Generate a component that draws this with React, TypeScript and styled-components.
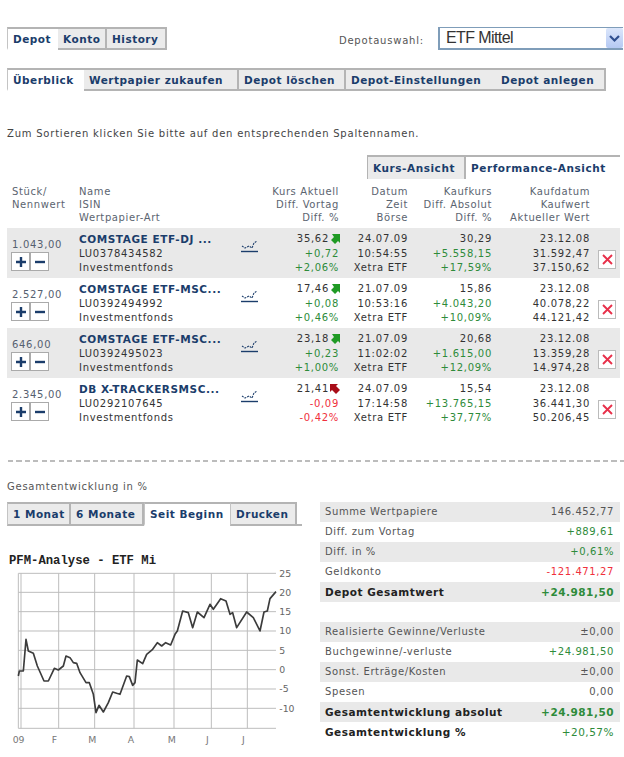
import React from 'react';
import styled, { createGlobalStyle } from 'styled-components';

const GlobalStyle = createGlobalStyle`
  html, body {
    margin: 0;
    padding: 0;
    background: #fff;
  }
  body {
    font-family: "DejaVu Sans", Verdana, sans-serif;
    font-size: 10px;
    color: #3a3a3a;
  }
`;

const NAVY = '#1b3d6b';
const GREEN = '#2e8b3a';
const RED = '#f0303c';

const Page = styled.div`
  width: 624px;
  height: 757px;
  overflow: hidden;
  padding: 27px 1px 0 7px;
  box-sizing: border-box;
`;

const TopBar = styled.div`
  display: flex;
  justify-content: space-between;
  align-items: stretch;
  height: 23px;
`;

const TabRow = styled.div`
  display: flex;
  height: 23px;
`;

const Tab = styled.div<{ $active?: boolean; $w: number; $sep?: boolean; $left?: boolean }>`
  width: ${(p) => p.$w}px;
  box-sizing: border-box;
  display: flex;
  align-items: center;
  padding-left: 5px;
  font-weight: bold;
  font-size: 10.5px;
  letter-spacing: 0.5px;
  white-space: nowrap;
  color: ${NAVY};
  background: ${(p) => (p.$active ? '#fff' : '#ebebeb')};
  border-top: 2px solid #b4b4b4;
  border-left: ${(p) => (p.$left || p.$active ? '1px solid #c4c4c4' : 'none')};
  border-right: ${(p) => (p.$sep ? '2px solid #b4b4b4' : 'none')};
  border-bottom: 2px solid ${(p) => (p.$active ? '#fff' : '#b4b4b4')};
`;

const TabTail = styled.div`
  width: 5px;
  box-sizing: border-box;
  border-bottom: 2px solid #b4b4b4;
`;

const Picker = styled.div`
  display: flex;
  align-items: center;
  gap: 14px;
`;

const PickerLabel = styled.span`
  font-size: 10px;
  letter-spacing: 0.8px;
  color: #555;
  margin-top: 4px;
`;

const SelectBox = styled.div`
  width: 185px;
  height: 23px;
  box-sizing: border-box;
  border: 1px solid #7f9db9;
  border-left-width: 2px;
  border-bottom-width: 2px;
  border-right: none;
  display: flex;
  align-items: center;
  justify-content: space-between;
  padding: 0 0 0 6px;
  font-family: "Liberation Sans", Arial, sans-serif;
  font-size: 16px;
  letter-spacing: -0.6px;
  color: #333;
`;

const SelectArrow = styled.div`
  width: 17px;
  height: 20px;
  border-radius: 2px;
  background: linear-gradient(#dbe6fb, #b5c9f3);
  display: flex;
  align-items: center;
  justify-content: center;
`;

const SubTabs = styled(TabRow)`
  margin-top: 18px;
`;

const Hint = styled.div`
  margin-top: 36px;
  height: 13px;
  line-height: 13px;
  font-size: 10px;
  letter-spacing: 0.78px;
  color: #444;
  white-space: nowrap;
`;

const ViewTabs = styled.div`
  margin: 15px 0 0 360px;
  display: flex;
  height: 24px;
`;

const ViewTab = styled.div<{ $active?: boolean; $w: number }>`
  width: ${(p) => p.$w}px;
  box-sizing: border-box;
  display: flex;
  align-items: center;
  padding-left: 5px;
  font-weight: bold;
  font-size: 10.5px;
  letter-spacing: 0.55px;
  white-space: nowrap;
  color: ${NAVY};
  background: ${(p) => (p.$active ? '#fff' : '#ebebeb')};
  border-top: 2px solid #b4b4b4;
  border-left: 1px solid #b4b4b4;
  border-right: ${(p) => (p.$active ? 'none' : '1px solid #b4b4b4')};
`;

const gridColumns = '72px 162px 30px 68px 69px 84px 98px 30px';

const HeadRow = styled.div`
  display: grid;
  grid-template-columns: ${gridColumns};
  height: 49px;
  padding-top: 6px;
  box-sizing: border-box;
  line-height: 13px;
  font-size: 10px;
  letter-spacing: 0.6px;
  color: #5b6470;
`;

const StockRow = styled.div<{ $shade?: boolean }>`
  display: grid;
  grid-template-columns: ${gridColumns};
  height: 50px;
  width: 613px;
  line-height: 14.5px;
  font-size: 10px;
  letter-spacing: 0.7px;
  background: ${(p) => (p.$shade ? '#e9e9e9' : '#fff')};
`;

const Cell = styled.div<{ $right?: boolean; $first?: boolean }>`
  text-align: ${(p) => (p.$right ? 'right' : 'left')};
  padding-left: ${(p) => (p.$first ? '5px' : '0')};
  white-space: nowrap;
`;

const StockCell = styled(Cell)`
  padding-top: 4px;
  color: #333;
`;

const AmountCell = styled.div`
  padding: 10px 0 0 5px;
  color: #556070;
  line-height: 14px;
`;

const StepGroup = styled.div`
  display: flex;
  margin-left: -1px;
`;

const StepButton = styled.div`
  width: 19px;
  height: 19px;
  box-sizing: border-box;
  border: 1px solid #aaa;
  background: #fff;
  display: flex;
  align-items: center;
  justify-content: center;
  color: ${NAVY};
`;

const StockName = styled.div`
  font-weight: bold;
  color: ${NAVY};
  letter-spacing: 0.55px;
  font-size: 10.5px;
`;

const ChartLink = styled.div`
  padding-top: 11px;
  color: ${NAVY};
`;

const PriceLine = styled.div`
  display: flex;
  justify-content: flex-end;
  align-items: center;
  gap: 1px;
  margin-right: -1px;
`;

const Figure = styled.div<{ $c?: string; $bold?: boolean }>`
  color: ${(p) => p.$c || 'inherit'};
  font-weight: ${(p) => (p.$bold ? 'bold' : 'normal')};
`;

const RemoveCell = styled.div`
  padding: 22px 0 0 8px;
`;

const RemoveButton = styled.div`
  width: 18px;
  height: 19px;
  box-sizing: border-box;
  border: 1px solid #bbb;
  background: #fff;
  display: flex;
  align-items: center;
  justify-content: center;
`;

const Divider = styled.div`
  margin: 32px 0 0 1px;
  height: 2px;
  width: 616px;
  background: repeating-linear-gradient(90deg, #bcbcbc 0 5px, #fff 5px 8.5px);
`;

const Bottom = styled.div`
  display: grid;
  grid-template-columns: 313px 300px;
  margin-top: 18px;
`;

const SectionTitle = styled.div`
  font-size: 10px;
  letter-spacing: 0.75px;
  line-height: 13px;
  color: #555;
`;

const RangeTabs = styled(TabRow)`
  margin-top: 8.5px;
  height: 24px;
`;

const ChartTitle = styled.div`
  margin: 28px 0 0 2px;
  font-family: "Liberation Mono", monospace;
  font-weight: bold;
  font-size: 12.25px;
  line-height: 14px;
  color: #222;
`;

const ChartSvg = styled.svg`
  display: block;
  width: 300px;
  height: 186.67px;
  margin: 0.67px 0 0 3px;
`;

const Summary = styled.div`
  margin-top: 21.5px;
  display: flex;
  flex-direction: column;
`;

const SummaryRow = styled.div<{ $shade?: boolean; $bold?: boolean; $gap?: boolean }>`
  height: 20px;
  margin-top: ${(p) => (p.$gap ? '20px' : '0')};
  display: flex;
  align-items: center;
  justify-content: space-between;
  padding: 0 6px 0 5px;
  font-size: ${(p) => (p.$bold ? '10.5px' : '10px')};
  font-weight: ${(p) => (p.$bold ? 'bold' : 'normal')};
  letter-spacing: ${(p) => (p.$bold ? '0.5px' : '0.6px')};
  color: ${(p) => (p.$bold ? '#222' : '#555')};
  background: ${(p) => (p.$shade ? '#e9e9e9' : '#fff')};
`;

const Plus = () => (
  <svg width="12" height="12" viewBox="0 0 12 12">
    <path d="M1 6h10M6 1v10" stroke="currentColor" strokeWidth="2.4" />
  </svg>
);

const Minus = () => (
  <svg width="12" height="12" viewBox="0 0 12 12">
    <path d="M1 6h10" stroke="currentColor" strokeWidth="2.4" />
  </svg>
);

const Cross = () => (
  <svg width="11" height="11" viewBox="0 0 11 11">
    <path d="M1 1l9 9M10 1l-9 9" stroke="#e8304a" strokeWidth="1.9" />
  </svg>
);

const MiniChart = () => (
  <svg width="17" height="14" viewBox="0 0 17 14">
    <path
      d="M1 7l3 2 4-2 3 2 2-5 3-2"
      fill="none"
      stroke="currentColor"
      strokeWidth="1.1"
      strokeDasharray="2 1"
    />
    <path d="M0 12.500h17" stroke="currentColor" strokeWidth="1.4" />
  </svg>
);

const Arrow = ({ up }: { up: boolean }) => (
  <svg width="10" height="10" viewBox="0 0 10 10">
    {up ? (
      <path d="M10 0v9L8 7 5 10 1 6l3-3-2-3z" fill="#1f9a24" />
    ) : (
      <path d="M0 0h8L6 2l4 4-4 4-4-4-2 2z" fill="#a80d18" />
    )}
  </svg>
);

type Stock = {
  amount: string;
  name: string;
  isin: string;
  price: string;
  diff: string;
  diffPct: string;
  date: string;
  time: string;
  buy: string;
  buyDiff: string;
  buyPct: string;
  buyDate: string;
  buyValue: string;
  current: string;
};

const stocks: Stock[] = [
  { amount: '1.043,00', name: 'COMSTAGE ETF-DJ ...', isin: 'LU0378434582', price: '35,62', diff: '+0,72', diffPct: '+2,06%', date: '24.07.09', time: '10:54:55', buy: '30,29', buyDiff: '+5.558,15', buyPct: '+17,59%', buyDate: '23.12.08', buyValue: '31.592,47', current: '37.150,62' },
  { amount: '2.527,00', name: 'COMSTAGE ETF-MSC...', isin: 'LU0392494992', price: '17,46', diff: '+0,08', diffPct: '+0,46%', date: '21.07.09', time: '10:53:16', buy: '15,86', buyDiff: '+4.043,20', buyPct: '+10,09%', buyDate: '23.12.08', buyValue: '40.078,22', current: '44.121,42' },
  { amount: '646,00', name: 'COMSTAGE ETF-MSC...', isin: 'LU0392495023', price: '23,18', diff: '+0,23', diffPct: '+1,00%', date: '21.07.09', time: '11:02:02', buy: '20,68', buyDiff: '+1.615,00', buyPct: '+12,09%', buyDate: '23.12.08', buyValue: '13.359,28', current: '14.974,28' },
  { amount: '2.345,00', name: 'DB X-TRACKERSMSC...', isin: 'LU0292107645', price: '21,41', diff: '-0,09', diffPct: '-0,42%', date: '24.07.09', time: '17:14:58', buy: '15,54', buyDiff: '+13.765,15', buyPct: '+37,77%', buyDate: '23.12.08', buyValue: '36.441,30', current: '50.206,45' },
];

type SummaryItem = {
  label: string;
  value: string;
  color?: string;
  bold?: boolean;
  valueBold?: boolean;
};

const summaryTop: SummaryItem[] = [
  { label: 'Summe Wertpapiere', value: '146.452,77' },
  { label: 'Diff. zum Vortag', value: '+889,61', color: GREEN },
  { label: 'Diff. in %', value: '+0,61%', color: GREEN },
  { label: 'Geldkonto', value: '-121.471,27', color: RED },
  { label: 'Depot Gesamtwert', value: '+24.981,50', color: GREEN, bold: true, valueBold: true },
];

const summaryBottom: SummaryItem[] = [
  { label: 'Realisierte Gewinne/Verluste', value: '±0,00' },
  { label: 'Buchgewinne/-verluste', value: '+24.981,50', color: GREEN },
  { label: 'Sonst. Erträge/Kosten', value: '±0,00' },
  { label: 'Spesen', value: '0,00' },
  { label: 'Gesamtentwicklung absolut', value: '+24.981,50', color: GREEN, bold: true, valueBold: true },
  { label: 'Gesamtentwicklung %', value: '+20,57%', color: GREEN, bold: true },
];

// chart coordinates are measured in 3x reference pixels
const hLines = [312, 369, 427, 485, 543, 601, 659, 717, 777];
const vLines = [55, 63, 176, 284, 402, 522, 634, 742];
const yLabels = ['25', '20', '15', '10', '5', '0', '-5', '-10'];
const xLabels = [
  { x: 38, t: '09' },
  { x: 155, t: 'F' },
  { x: 265, t: 'M' },
  { x: 383, t: 'A' },
  { x: 503, t: 'M' },
  { x: 618, t: 'J' },
  { x: 726, t: 'J' },
];
const curve =
  '55,620 58,605 70,605 78,510 85,545 100,552 112,590 132,635 145,635 163,597 175,602 190,590 198,560 210,565 220,580 230,582 240,610 258,640 268,640 280,675 288,730 297,708 310,728 325,700 338,668 350,672 360,675 380,620 388,622 398,648 405,640 412,572 428,583 440,555 458,540 472,520 485,530 497,520 512,527 525,495 532,485 548,425 565,430 578,475 592,428 612,445 630,405 640,420 662,388 678,395 690,435 698,430 710,475 740,428 760,445 780,485 792,428 802,425 810,388 828,367';

const renderSummary = (items: SummaryItem[], gap: boolean) =>
  items.map((r, i) => (
    <SummaryRow key={r.label} $shade={i % 2 === 0} $bold={r.bold} $gap={gap && i === 0}>
      {r.label}
      <Figure $c={r.color} $bold={r.valueBold}>{r.value}</Figure>
    </SummaryRow>
  ));

const App = () => {
  return (
    <Page>
      <GlobalStyle />
      <TopBar>
        <TabRow>
          <Tab $active $w={51}>Depot</Tab>
          <Tab $w={49} $sep>Konto</Tab>
          <Tab $w={60} $sep>History</Tab>
        </TabRow>
        <Picker>
          <PickerLabel>Depotauswahl:</PickerLabel>
          <SelectBox>
            ETF Mittel
            <SelectArrow>
              <svg width="11" height="9" viewBox="0 0 11 9">
                <path d="M1 2l4.500 4.500L10 2" fill="none" stroke="#2f4f8f" strokeWidth="2.200" />
              </svg>
            </SelectArrow>
          </SelectBox>
        </Picker>
      </TopBar>

      <SubTabs>
        <Tab $active $w={77}>Überblick</Tab>
        <Tab $w={155} $sep>Wertpapier zukaufen</Tab>
        <Tab $w={107} $sep>Depot löschen</Tab>
        <Tab $w={150}>Depot-Einstellungen</Tab>
        <Tab $w={110} $sep>Depot anlegen</Tab>
      </SubTabs>

      <Hint>Zum Sortieren klicken Sie bitte auf den entsprechenden Spaltennamen.</Hint>

      <ViewTabs>
        <ViewTab $w={98}>Kurs-Ansicht</ViewTab>
        <ViewTab $active $w={155}>Performance-Ansicht</ViewTab>
      </ViewTabs>

      <HeadRow>
        <Cell $first>Stück/<br />Nennwert</Cell>
        <Cell>Name<br />ISIN<br />Wertpapier-Art</Cell>
        <Cell />
        <Cell $right>Kurs Aktuell<br />Diff. Vortag<br />Diff. %</Cell>
        <Cell $right>Datum<br />Zeit<br />Börse</Cell>
        <Cell $right>Kaufkurs<br />Diff. Absolut<br />Diff. %</Cell>
        <Cell $right>Kaufdatum<br />Kaufwert<br />Aktueller Wert</Cell>
        <Cell />
      </HeadRow>

      {stocks.map((s, i) => {
        const up = !s.diff.startsWith('-');
        const c = up ? GREEN : RED;
        return (
          <StockRow key={s.isin} $shade={i % 2 === 0}>
            <AmountCell>
              {s.amount}
              <StepGroup>
                <StepButton><Plus /></StepButton>
                <StepButton><Minus /></StepButton>
              </StepGroup>
            </AmountCell>
            <StockCell>
              <StockName>{s.name}</StockName>
              {s.isin}
              <br />
              Investmentfonds
            </StockCell>
            <ChartLink><MiniChart /></ChartLink>
            <StockCell $right>
              <PriceLine>{s.price}<Arrow up={up} /></PriceLine>
              <Figure $c={c}>{s.diff}</Figure>
              <Figure $c={c}>{s.diffPct}</Figure>
            </StockCell>
            <StockCell $right>
              {s.date}<br />{s.time}<br />Xetra ETF
            </StockCell>
            <StockCell $right>
              {s.buy}
              <Figure $c={GREEN}>{s.buyDiff}</Figure>
              <Figure $c={GREEN}>{s.buyPct}</Figure>
            </StockCell>
            <StockCell $right>
              {s.buyDate}<br />{s.buyValue}<br />{s.current}
            </StockCell>
            <RemoveCell>
              <RemoveButton><Cross /></RemoveButton>
            </RemoveCell>
          </StockRow>
        );
      })}

      <Divider />

      <Bottom>
        <div>
          <SectionTitle>Gesamtentwicklung in %</SectionTitle>
          <RangeTabs>
            <Tab $w={64} $left $sep>1 Monat</Tab>
            <Tab $w={73} $sep>6 Monate</Tab>
            <Tab $active $w={86}>Seit Beginn</Tab>
            <Tab $w={67} $left $sep>Drucken</Tab>
            <TabTail />
          </RangeTabs>
          <ChartTitle>PFM-Analyse - ETF Mi</ChartTitle>
          <ChartSvg viewBox="30 296 900 560">
            {hLines.map((y) => (
              <line key={y} x1={55} x2={828} y1={y} y2={y} stroke="#bdbdbd" strokeWidth={3} />
            ))}
            {vLines.map((x) => (
              <line key={x} x1={x} x2={x} y1={312} y2={777} stroke="#bdbdbd" strokeWidth={3} />
            ))}
            {yLabels.map((t, i) => (
              <text key={t} x={838} y={hLines[i] + 10} fontSize={28} fill="#666">{t}</text>
            ))}
            {xLabels.map((l, i) => (
              <text key={i} x={l.x} y={820} fontSize={28} fill="#777">{l.t}</text>
            ))}
            <polyline points={curve} fill="none" stroke="#3c3c3c" strokeWidth={5} strokeLinejoin="round" />
          </ChartSvg>
        </div>
        <Summary>
          {renderSummary(summaryTop, false)}
          {renderSummary(summaryBottom, true)}
        </Summary>
      </Bottom>
    </Page>
  );
};

export default App;
